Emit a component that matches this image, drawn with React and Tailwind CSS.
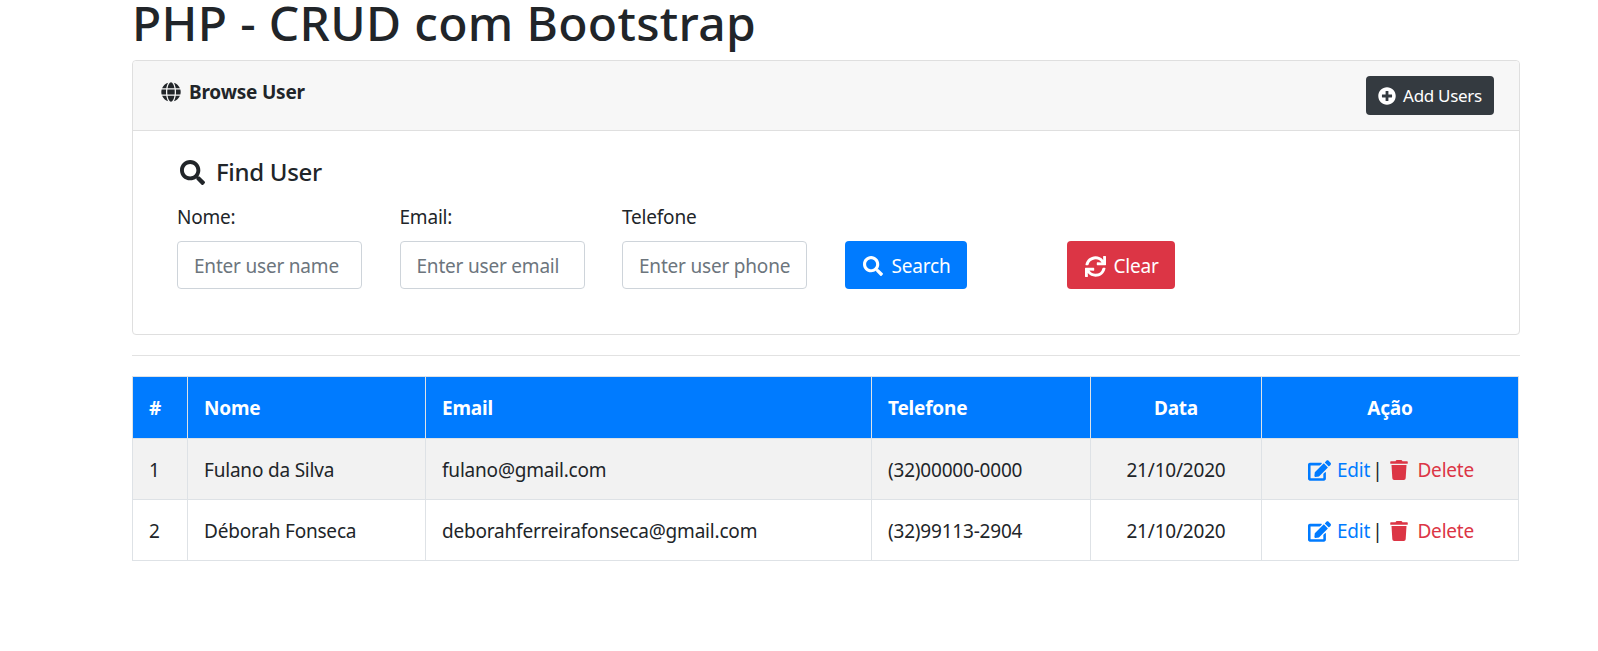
import React from 'react';
import { FaGlobe, FaSearch, FaPlusCircle, FaSync, FaEdit, FaTrash } from 'react-icons/fa';

const users = [
  { id: 1, nome: 'Fulano da Silva', email: 'fulano@gmail.com', telefone: '(32)00000-0000', data: '21/10/2020', rowClass: 'bg-[#f2f2f2]' },
  { id: 2, nome: 'Déborah Fonseca', email: 'deborahferreirafonseca@gmail.com', telefone: '(32)99113-2904', data: '21/10/2020', rowClass: 'bg-white' },
];

const fields = [
  { label: 'Nome:', placeholder: 'Enter user name' },
  { label: 'Email:', placeholder: 'Enter user email' },
  { label: 'Telefone', placeholder: 'Enter user phone' },
];

const App = () => {
  return (
    <div className="min-h-[651px] bg-white text-[#212529] text-[19px] tracking-[-0.2px] font-['Noto_Sans','Open_Sans',sans-serif] overflow-hidden">
      <div className="ml-[132px] w-[1388px]">
        <h1 className="text-[48px] leading-[52px] font-medium -mt-[3px] mb-[11px] tracking-[0.33px]">PHP - CRUD com Bootstrap</h1>

        <div className="border border-[#dfdfdf] rounded-[4px] h-[275px]">
          <div className="h-[70px] bg-[#f7f7f7] border-b border-[#dfdfdf] rounded-t-[4px] flex justify-between pl-7 pr-[25px]">
            <div className="flex items-center gap-[8px] h-[62px] font-bold">
              <FaGlobe className="text-[20px]" />
              <span>Browse User</span>
            </div>
            <button className="mt-[15px] h-[39px] w-[128px] bg-[#343a40] text-white text-[17px] tracking-[-0.3px] rounded-[4px] flex items-center justify-center gap-[7px] pt-[1px]">
              <FaPlusCircle className="text-[18px]" />
              Add Users
            </button>
          </div>

          <div className="pl-[44px] pt-[23px]">
            <div className="flex items-center gap-[11px] text-[24px] leading-[36px] font-medium pl-[3px] tracking-[-0.3px]">
              <FaSearch className="text-[25px]" />
              Find User
            </div>
            <div className="flex mt-[14px]">
              {fields.map((f) => (
                <div key={f.label} className="w-[222.5px]">
                  <label className="block leading-[27px] mb-[10px]">{f.label}</label>
                  <input
                    placeholder={f.placeholder}
                    className="w-[185px] h-[48px] border border-[#ced4da] rounded-[4px] px-4 pt-[2px] placeholder:text-[#6c757d] outline-none"
                  />
                </div>
              ))}
              <div className="w-[222.5px] pt-[37px]">
                <button className="h-[48px] w-[122px] bg-[#007bff] text-white rounded-[4px] flex items-center justify-center gap-[9px] pt-[2px] pl-[2px]">
                  <FaSearch className="text-[20px]" />
                  Search
                </button>
              </div>
              <div className="pt-[37px]">
                <button className="h-[48px] w-[108px] bg-[#dc3545] text-white rounded-[4px] flex items-center justify-center gap-[7px] pt-[2px] pl-[2px]">
                  <FaSync className="text-[21px]" />
                  Clear
                </button>
              </div>
            </div>
          </div>
        </div>

        <hr className="mt-5 mb-5 border-t border-[#e2e2e2]" />

        <table className="table-fixed border-collapse w-[1386px]">
          <colgroup>
            <col className="w-[55px]" />
            <col className="w-[238px]" />
            <col className="w-[446px]" />
            <col className="w-[219px]" />
            <col className="w-[171px]" />
            <col className="w-[257px]" />
          </colgroup>
          <thead>
            <tr className="h-[62px] bg-[#007bff] text-white font-bold">
              <th className="border border-[#dee2e6] border-b-0 px-4 pt-[2px] text-left">#</th>
              <th className="border border-[#dee2e6] border-b-0 px-4 pt-[2px] text-left">Nome</th>
              <th className="border border-[#dee2e6] border-b-0 px-4 pt-[2px] text-left">Email</th>
              <th className="border border-[#dee2e6] border-b-0 px-4 pt-[2px] text-left">Telefone</th>
              <th className="border border-[#dee2e6] border-b-0 px-4 pt-[2px] text-center">Data</th>
              <th className="border border-[#dee2e6] border-b-0 px-4 pt-[2px] text-center">Ação</th>
            </tr>
          </thead>
          <tbody>
            {users.map((u) => (
              <tr key={u.id} className={`h-[61px] ${u.rowClass}`}>
                <td className="border border-[#dee2e6] px-4 pt-[2px]">{u.id}</td>
                <td className="border border-[#dee2e6] px-4 pt-[2px]">{u.nome}</td>
                <td className="border border-[#dee2e6] px-4 pt-[2px]">{u.email}</td>
                <td className="border border-[#dee2e6] px-4 pt-[2px]">{u.telefone}</td>
                <td className="border border-[#dee2e6] px-4 pt-[2px] text-center">{u.data}</td>
                <td className="border border-[#dee2e6] px-4 pt-[2px]">
                  <div className="flex items-center justify-center pl-[2px]">
                    <a href="#" className="flex items-center gap-[6px] text-[#007bff]">
                      <FaEdit className="text-[23px]" />
                      Edit
                    </a>
                    <span className="ml-[2px] mr-[7px]">|</span>
                    <a href="#" className="flex items-center gap-[8px] text-[#dc3545]">
                      <FaTrash className="text-[20px]" />
                      Delete
                    </a>
                  </div>
                </td>
              </tr>
            ))}
          </tbody>
        </table>
      </div>
    </div>
  );
};

export default App;
